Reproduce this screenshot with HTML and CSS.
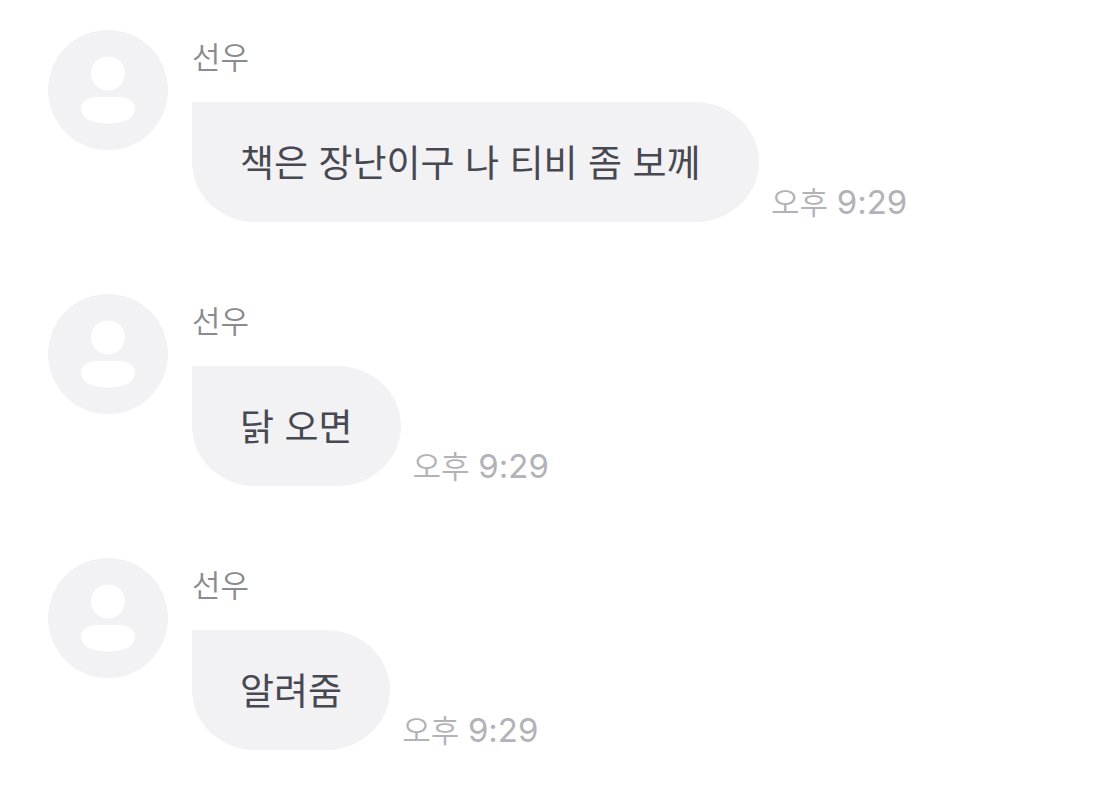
FILE: index.html
```html
<!DOCTYPE html>
<html lang="ko">
<head>
    <meta charset="UTF-8">
    <meta name="viewport" content="width=device-width, initial-scale=1.0">
    <title>선우</title>
    <link rel="stylesheet" href="styles.css">
</head>
<body>
    <main class="chat">
        <article class="message">
            <svg class="avatar" viewBox="0 0 120 120" aria-hidden="true">
                <circle class="avatar-bg" cx="60" cy="60" r="60"/>
                <circle cx="60" cy="43.500" r="17"/>
                <path d="M33 79C33 71 40 67 50 67H70C80 67 87 71 87 79C87 88 75 93.500 60 93.500S33 88 33 79Z"/>
            </svg>
            <div class="content">
                <div class="name">선우</div>
                <div class="row">
                    <p class="bubble">책은 장난이구 나 티비 좀 보께&nbsp;</p>
                    <time class="time" datetime="21:29">오후 <span class="clock">9:29</span></time>
                </div>
            </div>
        </article>
        <article class="message">
            <svg class="avatar" viewBox="0 0 120 120" aria-hidden="true">
                <circle class="avatar-bg" cx="60" cy="60" r="60"/>
                <circle cx="60" cy="43.500" r="17"/>
                <path d="M33 79C33 71 40 67 50 67H70C80 67 87 71 87 79C87 88 75 93.500 60 93.500S33 88 33 79Z"/>
            </svg>
            <div class="content">
                <div class="name">선우</div>
                <div class="row">
                    <p class="bubble">닭 오면</p>
                    <time class="time" datetime="21:29">오후 <span class="clock">9:29</span></time>
                </div>
            </div>
        </article>
        <article class="message">
            <svg class="avatar" viewBox="0 0 120 120" aria-hidden="true">
                <circle class="avatar-bg" cx="60" cy="60" r="60"/>
                <circle cx="60" cy="43.500" r="17"/>
                <path d="M33 79C33 71 40 67 50 67H70C80 67 87 71 87 79C87 88 75 93.500 60 93.500S33 88 33 79Z"/>
            </svg>
            <div class="content">
                <div class="name">선우</div>
                <div class="row">
                    <p class="bubble">알려줌</p>
                    <time class="time" datetime="21:29">오후 <span class="clock">9:29</span></time>
                </div>
            </div>
        </article>
    </main>
</body>
</html>
```
FILE: styles.css
```css
body {
    margin: 0;
    background-color: #fff;
    font-family: Inter, "Noto Sans CJK KR", sans-serif;
}
.chat {
    display: flex;
    flex-direction: column;
    gap: 72px;
    padding: 30px 48px;
}
.message {
    display: flex;
    align-items: flex-start;
    gap: 24px;
}
.avatar {
    flex: none;
    width: 120px;
    height: 120px;
    fill: #fff;
}
.avatar-bg {
    fill: #f2f2f5;
}
.name {
    margin-bottom: 16px;
    color: #8a8a90;
    font-size: 31px;
    font-weight: 350;
    line-height: 56px;
}
.row {
    display: flex;
    align-items: flex-end;
    gap: 12px;
}
.bubble {
    margin: 0;
    padding: 34px 48px 30px;
    border-radius: 0 64px 64px 64px / 0 60px 60px 60px;
    background-color: #f2f2f5;
    color: #484850;
    font-size: 37px;
    line-height: 56px;
}
.time {
    color: #b2b2b8;
    font-size: 31px;
    font-weight: 350;
    line-height: 38px;
}
.clock {
    font-size: 33px;
    font-weight: 400;
}
```
